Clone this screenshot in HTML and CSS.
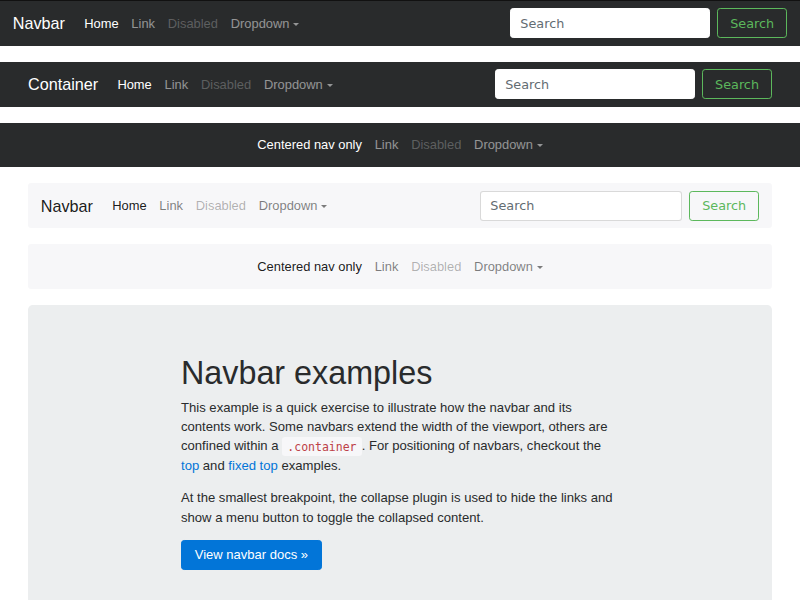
FILE: index.html
```html
<!DOCTYPE html>
<html>
<head>
<meta charset="utf-8">
<link rel="stylesheet" href="styles.css">
</head>
<body>
<div class="topline"></div>

<nav class="navbar dark">
  <a class="brand">Navbar</a>
  <ul class="nav">
    <li><a class="link active">Home</a></li>
    <li><a class="link">Link</a></li>
    <li><a class="link disabled">Disabled</a></li>
    <li><a class="link">Dropdown<span class="caret"></span></a></li>
  </ul>
  <form class="form">
    <input class="input" type="text" placeholder="Search">
    <button class="btn-outline" type="button">Search</button>
  </form>
</nav>

<nav class="navbar dark">
  <div class="inner">
    <a class="brand">Container</a>
    <ul class="nav">
      <li><a class="link active">Home</a></li>
      <li><a class="link">Link</a></li>
      <li><a class="link disabled">Disabled</a></li>
      <li><a class="link">Dropdown<span class="caret"></span></a></li>
    </ul>
    <form class="form">
      <input class="input" type="text" placeholder="Search">
      <button class="btn-outline" type="button">Search</button>
    </form>
  </div>
</nav>

<nav class="navbar dark centered">
  <ul class="nav">
    <li><a class="link active">Centered nav only</a></li>
    <li><a class="link">Link</a></li>
    <li><a class="link disabled">Disabled</a></li>
    <li><a class="link">Dropdown<span class="caret"></span></a></li>
  </ul>
</nav>

<div class="container">
  <nav class="navbar light rounded">
    <a class="brand">Navbar</a>
    <ul class="nav">
      <li><a class="link active">Home</a></li>
      <li><a class="link">Link</a></li>
      <li><a class="link disabled">Disabled</a></li>
      <li><a class="link">Dropdown<span class="caret"></span></a></li>
    </ul>
    <form class="form">
      <input class="input" type="text" placeholder="Search">
      <button class="btn-outline" type="button">Search</button>
    </form>
  </nav>

  <nav class="navbar light rounded centered">
    <ul class="nav">
      <li><a class="link active">Centered nav only</a></li>
      <li><a class="link">Link</a></li>
      <li><a class="link disabled">Disabled</a></li>
      <li><a class="link">Dropdown<span class="caret"></span></a></li>
    </ul>
  </nav>

  <div class="jumbotron">
    <div class="jumbo-col">
      <h1 class="title">Navbar examples</h1>
      <p class="lead">This example is a quick exercise to illustrate how the navbar and its contents work. Some navbars extend the width of the viewport, others are confined within a <code class="code">.container</code>. For positioning of navbars, checkout the <a class="text-link">top</a> and <a class="text-link">fixed top</a> examples.</p>
      <p class="lead">At the smallest breakpoint, the collapse plugin is used to hide the links and show a menu button to toggle the collapsed content.</p>
      <a class="btn-primary">View navbar docs &raquo;</a>
    </div>
  </div>
</div>
</body>
</html>
```

FILE: styles.css
```css
html, body {
  margin: 0;
  padding: 0;
}
body {
  font-family: "Liberation Sans", Arial, sans-serif;
  font-size: 13px;
  line-height: 19.2px;
  color: #292b2c;
  background: #fff;
  overflow: hidden;
  height: 600px;
}
.topline {
  height: 1px;
  background: #111;
}
.navbar {
  display: flex;
  align-items: center;
  height: 44.8px;
  padding: 0 12.8px;
  margin-bottom: 16px;
  box-sizing: border-box;
}
.inner {
  display: flex;
  align-items: center;
  width: 100%;
  padding: 0 15.2px;
}
.dark {
  background: #292b2c;
}
.light {
  background: #f7f7f9;
}
.rounded {
  border-radius: 3.2px;
}
.centered {
  justify-content: center;
}
.brand {
  font-size: 16.2px;
  line-height: 24px;
  margin-right: 12.8px;
  white-space: nowrap;
}
.dark .brand { color: #fff; }
.light .brand { color: rgba(0,0,0,.9); }
.nav {
  display: flex;
  list-style: none;
  margin: 0;
  padding: 0;
}
.link {
  display: block;
  padding: 6.4px;
  font-size: 12.9px;
  line-height: 19.2px;
  white-space: nowrap;
}
.dark .link { color: rgba(255,255,255,.5); }
.dark .link.active { color: #fff; }
.dark .link.disabled { color: rgba(255,255,255,.25); }
.light .link { color: rgba(0,0,0,.5); }
.light .link.active { color: rgba(0,0,0,.9); }
.light .link.disabled { color: rgba(0,0,0,.3); }
.caret {
  display: inline-block;
  width: 0;
  height: 0;
  margin-left: 3.84px;
  vertical-align: middle;
  border-top: 3.84px solid;
  border-left: 3.84px solid transparent;
  border-right: 3.84px solid transparent;
}
.form {
  display: flex;
  align-items: center;
  margin: 0 0 0 auto;
}
.input {
  width: 200px;
  height: 30px;
  box-sizing: border-box;
  padding: 0 9.6px;
  font-family: "DejaVu Sans", sans-serif;
  font-size: 12.8px;
  color: #464a4c;
  background: #fff;
  border: 1px solid rgba(0,0,0,.15);
  border-radius: 3.2px;
  margin-right: 7.5px;
  outline: none;
}
.light .input {
  width: 202px;
}
.dark .input {
  border-color: #fff;
}
.input::placeholder {
  color: #636c72;
  opacity: 1;
}
.btn-outline {
  height: 30px;
  box-sizing: border-box;
  padding: 0 12px;
  font-family: "DejaVu Sans", sans-serif;
  font-size: 12.8px;
  color: #5cb85c;
  background: transparent;
  border: 1px solid #5cb85c;
  border-radius: 3.2px;
}
.container {
  margin: 0 28px;
}
.jumbotron {
  background: #eceeef;
  border-radius: 4.8px;
  padding: 51.2px 0 60px;
}
.jumbo-col {
  width: 438px;
  margin: 0 auto;
}
.title {
  font-size: 32.3px;
  font-weight: normal;
  line-height: 35.2px;
  margin: 0 0 6.4px;
  color: #292b2c;
}
.lead {
  font-size: 13.1px;
  margin: 0 0 12.8px;
}
.code {
  font-family: "DejaVu Sans Mono", monospace;
  font-size: 11.5px;
  color: #bd4147;
  background: #f7f7f9;
  padding: 2.56px 5.12px;
  border-radius: 3.2px;
}
.text-link {
  color: #0275d8;
}
.btn-primary {
  display: inline-block;
  box-sizing: border-box;
  height: 30.8px;
  padding: 6.4px 12.8px;
  line-height: 16px;
  border: 1px solid #0275d8;
  background: #0275d8;
  color: #fff;
  border-radius: 3.2px;
  font-size: 13px;
}
```
